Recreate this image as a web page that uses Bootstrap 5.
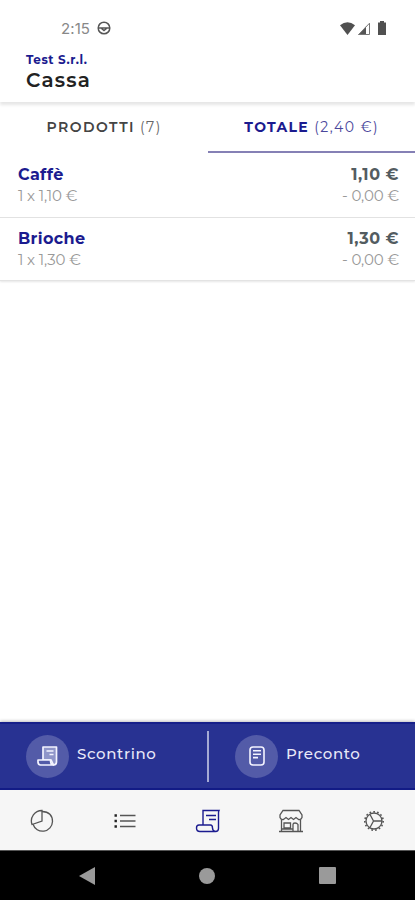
<!DOCTYPE html>
<html lang="it">
<head>
<meta charset="utf-8">
<meta name="viewport" content="width=device-width, initial-scale=1">
<title>Cassa</title>
<link href="https://cdn.jsdelivr.net/npm/bootstrap@5.3.0/dist/css/bootstrap.min.css" rel="stylesheet">
<style>
:root{--navy:#1b1b8f;--bar:#283292}
body{font-family:Montserrat,Inter,"Open Sans",sans-serif;background:#fff;line-height:1}
svg{display:block;flex:none}
.screen{height:900px;overflow:hidden}
.status{height:50px;padding:6px 29px 0 61px;color:#666}
.clock{font:400 15px/1 Inter,sans-serif;letter-spacing:.1px;width:36px;color:#888}
.app-head{height:52px;padding:3px 26px 0;box-shadow:0 3px 3px rgba(0,0,0,.1);position:relative}
.company{font-size:12px;line-height:13px;font-weight:700;color:var(--navy);letter-spacing:.55px}
.title{font-size:20px;line-height:24px;font-weight:600;color:#222;letter-spacing:1.2px;margin:2px 0 0}
.tabs{height:51px}
.tabs a{font-size:14px;color:#666;text-decoration:none;letter-spacing:1.45px;border-bottom:2px solid transparent}
.tabs a span{margin-right:-1px}
.tabs a b{font-weight:600;color:#444;letter-spacing:1.45px}
.tabs a.active{color:#4a479c;border-color:#8580b5}
.tabs a.active b{font-weight:700;color:var(--navy);letter-spacing:1.3px}
.sale{height:64px;padding:13px 16px 0 18px;border-bottom:1px solid #e3e3e3}
.sale:first-child{height:65px}
.sale:last-child{padding-top:12px;box-shadow:0 1px 2px rgba(0,0,0,.1);height:63px}
.nm{font-size:16px;line-height:18px;font-weight:700;color:var(--navy);letter-spacing:.35px}
.pr{font-size:16px;line-height:18px;font-weight:700;color:#535c61;letter-spacing:.5px}
.sub{font-size:15px;line-height:17px;margin-top:3px;color:#999;font-weight:400;letter-spacing:-.15px}
.actions{height:68px;background:var(--bar);border-top:2px solid #17208a;border-bottom:2px solid #121b86;box-shadow:0 -1px 3px rgba(0,0,0,.25);color:#e8e9f8}
.actions button{color:inherit;background:none;border:0;font-size:15px;font-weight:500;letter-spacing:.65px;padding:0 0 0 26px}
.actions button+button{padding-left:29px}
.disc{width:43px;height:43px;border-radius:50%;background:#535ba8;margin-right:8px}
.rule{width:2px;height:51px;background:#a5aad4;margin-left:1px}
.label-up{margin-top:-5px}
.bottom{height:60px;background:#f6f6f6;color:#555}
.bottom svg{stroke:currentColor;fill:none;stroke-width:1.3;margin-top:1px}
.sys{height:50px;background:#000;border-top:1px solid #555}
.sys-keys{width:257px;margin-left:79px}
</style>
</head>
<body>
<div class="screen d-flex flex-column">
  <div class="status d-flex align-items-center">
    <span class="clock">2:15</span>
    <svg width="14" height="14" viewBox="0 0 14 14" fill="none" stroke="#555" stroke-width="1.500"><circle cx="7" cy="7" r="5.800"/><path d="M1 7h12M4.500 7.500 7 9.500l2.500-2"/></svg>
    <div class="d-flex align-items-center ms-auto">
      <svg width="15" height="13" viewBox="0 0 15 13"><path fill="#505050" d="M0 3.200Q7.500-2.500 15 3.200L7.500 13Z"/></svg>
      <svg width="12" height="13" viewBox="0 0 12 13" style="margin-left:3px"><path fill="#555" d="M0 13 8 4.500V13Z"/><path fill="none" stroke="#777" d="M.8 12.500 11.500 1.200V12.500Z"/></svg>
      <svg width="8" height="14" viewBox="0 0 8 14" style="margin:0 0 0 8px"><path fill="#505050" d="M2 0h4v1.500H8V14H0V1.500h2Z"/></svg>
    </div>
  </div>
  <header class="app-head">
    <div class="company">Test S.r.l.</div>
    <h1 class="title">Cassa</h1>
  </header>
  <nav class="tabs d-flex">
    <a href="#" class="w-50 d-flex align-items-center justify-content-center"><span><b>PRODOTTI</b> (7)</span></a>
    <a href="#" class="active w-50 d-flex align-items-center justify-content-center"><span><b>TOTALE</b> (2,40 €)</span></a>
  </nav>
  <main class="flex-grow-1">
    <div class="sale d-flex justify-content-between">
      <div><div class="nm">Caffè</div><div class="sub">1 x 1,10 €</div></div>
      <div class="text-end"><div class="pr">1,10 €</div><div class="sub">- 0,00 €</div></div>
    </div>
    <div class="sale d-flex justify-content-between">
      <div><div class="nm">Brioche</div><div class="sub">1 x 1,30 €</div></div>
      <div class="text-end"><div class="pr">1,30 €</div><div class="sub">- 0,00 €</div></div>
    </div>
  </main>
  <div class="actions d-flex align-items-center">
    <button class="d-flex align-items-center flex-fill w-50">
      <span class="disc d-flex align-items-center justify-content-center"><svg width="21" height="20" viewBox="0 0 21 20" fill="none" stroke="#f4f4ff" stroke-width="1.700" stroke-linejoin="round"><path fill="#8f95c9" d="M6 13V1H19.500V15.500Q19.500 19 16.500 19L14 14H6Z"/><path fill="#535ba8" d="M1 14H13.500Q13.500 19 16.500 19H3.500Q1 19 1 16Z"/><path stroke-width="1.400" d="M9.500 5h7M12.500 8.500h4"/></svg></span>
      <span class="label-up">Scontrino</span>
    </button>
    <div class="rule"></div>
    <button class="d-flex align-items-center flex-fill w-50">
      <span class="disc d-flex align-items-center justify-content-center"><svg width="16" height="20" viewBox="0 0 16 20" fill="none" stroke="#f4f4ff" stroke-width="1.600"><rect x="1" y="1" width="14" height="18" rx="3"/><path d="M4 4.800h8M4 8.200h8M4 11.600h5"/></svg></span>
      <span class="label-up">Preconto</span>
    </button>
  </div>
  <nav class="bottom d-flex align-items-center">
    <div class="col d-flex justify-content-center"><svg width="24" height="24" viewBox="0 0 24 24"><path d="M12 1.500V12L2 15.500A10.500 10.500 0 0 1 12 1.500Z"/><path d="M12 2.500Q22.500 3 22.500 12.500A10 10 0 0 1 3 15.300"/></svg></div>
    <div class="col d-flex justify-content-center"><svg width="22" height="16" viewBox="0 0 22 16"><path stroke-width="1.400" d="M6 2.500h15.500M6 8h15.500M6 13.500h15.500"/><path stroke="#222" stroke-width="2.400" d="M.5 2.500h2.400M.5 8h2.400M.5 13.500h2.400"/></svg></div>
    <div class="col d-flex justify-content-center" style="color:#1b1b8f"><svg width="26" height="24" viewBox="0 0 26 24"><g stroke-width="1.400"><path d="M8 15.500V1.500H24Q23.500 2.500 23.500 4V19.500Q23.500 22.500 20.500 22.500H5Q1.500 22.500 1.500 19Q1.500 16 4 16H15.500Q17.500 16 17.500 19T20.500 22.500"/><path d="M11 6.500h10M14 10.500h7"/></g></svg></div>
    <div class="col d-flex justify-content-center"><svg width="24" height="24" viewBox="0 0 24 24"><path d="M4 1.500H20L23 6V8.500Q22 11 19.500 10.500L17 8.500 14.500 10.500 12 8.500 9.500 10.500 7 8.500 4.500 10.500Q2 11 1 8.500V6ZM2.500 11V22M21.500 11V22M0 22.500H24M5 14H11.500V19H5ZM14 22V15.500Q14 14 16 14T19 15.500V22M2.500 20H14"/></svg></div>
    <div class="col d-flex justify-content-center"><svg width="22" height="22" viewBox="0 0 22 22"><circle cx="11" cy="11" r="8"/><circle cx="11" cy="11" r="9.200" stroke-width="1.600" stroke-dasharray="1.700 2.150"/><path d="M7 4.500 10.500 11 7 17.500M10.500 11h8.500"/></svg></div>
  </nav>
  <div class="sys d-flex align-items-center">
    <div class="sys-keys d-flex align-items-center justify-content-between">
      <svg width="16" height="18" viewBox="0 0 16 18"><path fill="#9a9a9a" d="M16 0V18L0 9Z"/></svg>
      <svg width="16" height="16" viewBox="0 0 16 16"><circle cx="8" cy="8" r="8" fill="#9a9a9a"/></svg>
      <svg width="17" height="17" viewBox="0 0 17 17"><rect width="17" height="17" rx="1" fill="#9a9a9a"/></svg>
    </div>
  </div>
</div>
<script src="https://cdn.jsdelivr.net/npm/bootstrap@5.3.0/dist/js/bootstrap.bundle.min.js"></script>
</body>
</html>
